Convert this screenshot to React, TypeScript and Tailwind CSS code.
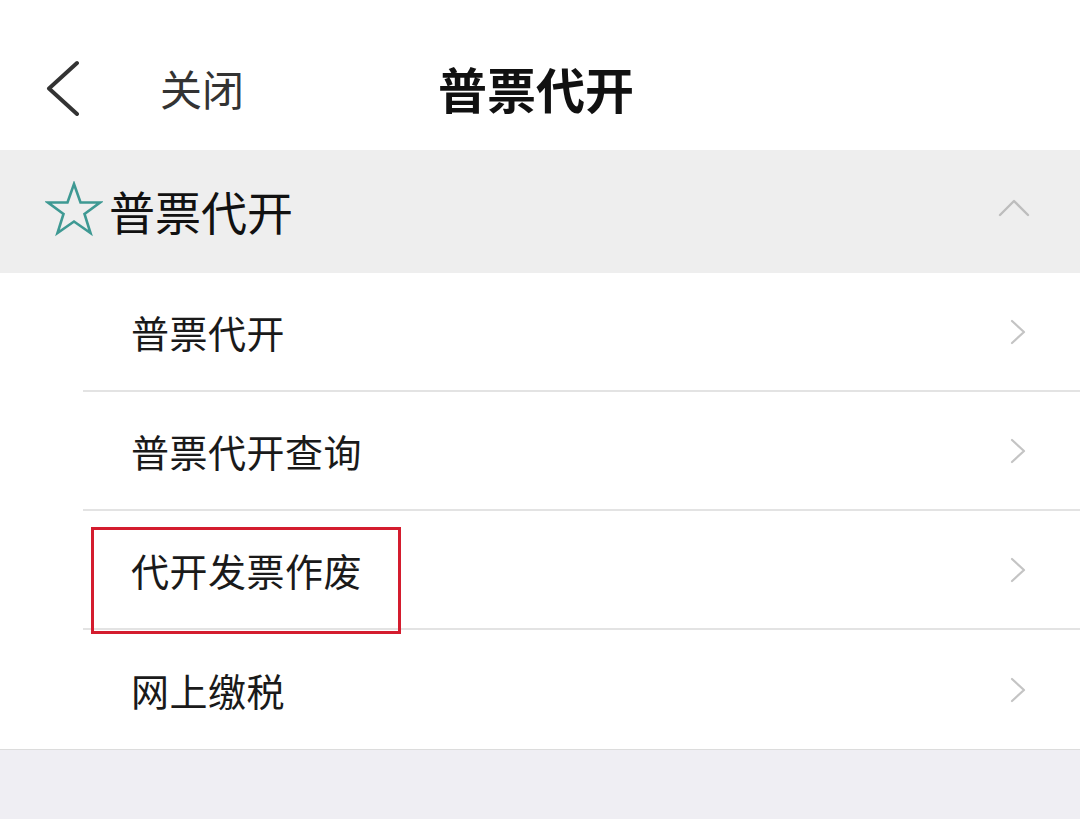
import React from 'react';

const FONT = { fontFamily: '"Noto Sans CJK SC", "Noto Sans", sans-serif' };

const ITEMS = ['普票代开', '普票代开查询', '代开发票作废', '网上缴税'];

function ChevronRight() {
  return (
    <svg width="16" height="26" viewBox="0 0 16 26" fill="none">
      <path d="M2 2 L14 13 L2 24" stroke="#c4c4c4" strokeWidth="2.2" strokeLinecap="round" strokeLinejoin="round" />
    </svg>
  );
}

export default function App() {
  return (
    <div className="w-[1080px] h-[819px] flex flex-col bg-[#efeef3] overflow-hidden" style={FONT}>
      {/* top bar */}
      <div className="h-[150px] bg-white flex items-center pt-[26px] shrink-0">
        <svg className="ml-[44px]" width="38" height="56" viewBox="0 0 38 56" fill="none">
          <path d="M33 3 L5 28.5 L33 54" stroke="#333333" strokeWidth="4" strokeLinecap="round" strokeLinejoin="round" />
        </svg>
        <span className="ml-[78px] text-[42px] leading-none text-[#333333]">关闭</span>
        <span className="ml-[194px] -mt-[2px] text-[49px] font-bold leading-none text-[#111111]">普票代开</span>
      </div>

      {/* section header */}
      <div className="h-[123px] bg-[#eeeeee] flex items-center shrink-0">
        <svg className="ml-[45px] -mt-[6px]" width="58" height="56" viewBox="0 0 58 56" fill="none">
          <path
            d="M29 3 L35.5 21.5 L55 21.5 L39.5 33 L45.5 52 L29 40.5 L12.5 52 L18.5 33 L3 21.5 L22.5 21.5 Z"
            stroke="#3e9993"
            strokeWidth="2.6"
            strokeLinejoin="miter"
          />
        </svg>
        <span className="ml-[6px] -mt-[4px] text-[46px] leading-none text-[#111111]">普票代开</span>
        <svg className="ml-auto mr-[50px] -mt-[8px]" width="32" height="20" viewBox="0 0 32 20" fill="none">
          <path d="M2 17 L16 3 L30 17" stroke="#bdbdbd" strokeWidth="2.4" strokeLinecap="round" strokeLinejoin="round" />
        </svg>
      </div>

      {/* list */}
      <div className="bg-white pl-[83px] border-b border-[#dcdcdc] shrink-0">
        {ITEMS.map((label, i) => (
          <div
            key={label}
            className={`relative h-[119px] flex items-center pl-[48px] pr-[54px] ${i < ITEMS.length - 1 ? 'border-b-2 border-[#e3e3e3]' : ''}`}
          >
            <span className="text-[38px] tracking-[0.5px] leading-none text-[#1a1a1a]">{label}</span>
            <span className="ml-auto">
              <ChevronRight />
            </span>
            {label === '代开发票作废' && (
              <div className="absolute left-[8px] top-[16px] w-[310px] h-[107px] border-[3px] border-[#d41c2e] z-10" />
            )}
          </div>
        ))}
      </div>

      <div className="flex-1 bg-[#efeef3]" />
    </div>
  );
}
